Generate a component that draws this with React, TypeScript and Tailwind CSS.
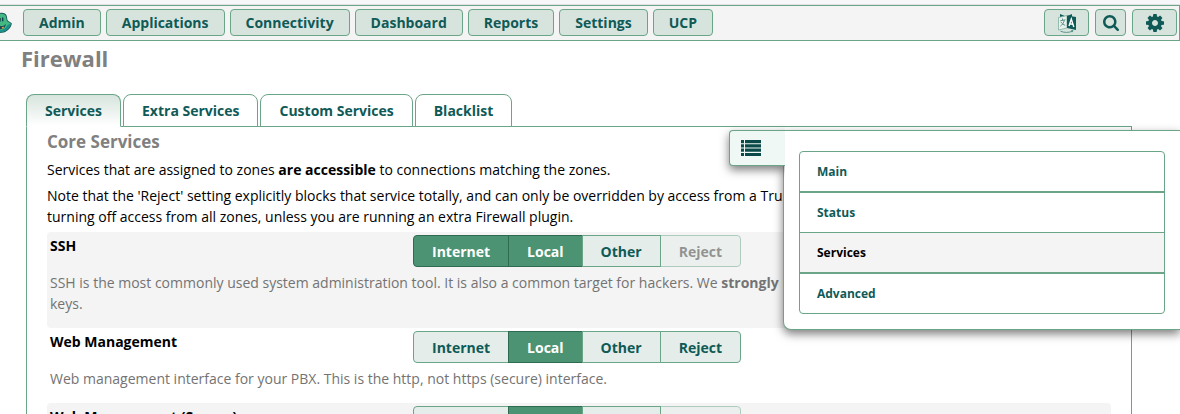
import { useState } from 'react'

const NAV = ['Admin', 'Applications', 'Connectivity', 'Dashboard', 'Reports', 'Settings', 'UCP']
const TABS = ['Services', 'Extra Services', 'Custom Services', 'Blacklist']
const ZONES = ['Internet', 'Local', 'Other', 'Reject']

const MENU = [
  { label: 'Main', border: 'border-b-2' },
  { label: 'Status', border: 'border-b' },
  { label: 'Services', border: 'border-b-2' },
  { label: 'Advanced', border: '' },
]

interface Service {
  id: string
  name: string
  zones: string[]
  lockReject: boolean
  desc: React.ReactNode
}

const SERVICES: Service[] = [
  {
    id: 'ssh',
    name: 'SSH',
    zones: ['Internet', 'Local'],
    lockReject: true,
    desc: (
      <>
        SSH is the most commonly used system administration tool. It is also a common target for hackers. We{' '}
        <b>strongly recommend</b> using a strong password and SSH keys.
      </>
    ),
  },
  {
    id: 'http',
    name: 'Web Management',
    zones: ['Local'],
    lockReject: false,
    desc: 'Web management interface for your PBX. This is the http, not https (secure) interface.',
  },
  {
    id: 'https',
    name: 'Web Management (Secure)',
    zones: ['Local'],
    lockReject: true,
    desc: 'Web management interface for your PBX. This is the https interface.',
  },
]

const IconFrog = () => (
  <svg viewBox="0 0 12 22" className="w-3 h-[22px]">
    <path d="M0 1C3 .3 6 1.500 6.800 4c.5 1.800.2 3.500 1.200 4.800l3.800 2.400c0 3.500-4 8-8 9.300L0 21Z" fill="#1c5a5c" />
    <path d="M0 1.800C2.800 1.200 5.300 2.200 6 4.400c.6 1.900.2 3.600 1.500 5l3.300 2.200c-.3 2.900-3.800 6.900-7.300 8L0 20.200Z" fill="#44b883" />
    <path d="M7.500 13l3.300-1.400c-.3 2.900-3.800 6.900-7.300 8L0 20.200v-1.700c3.500-.5 6.500-2.500 7.500-5.500Z" fill="#15908c" />
    <path d="M2 5.500h1.400v3.800H2zM0 6h.7v3.500H0z" fill="#123f49" />
    <path d="M0 14c3 .6 4.800-.6 5.600-2.200C6 15 3.500 17.500 0 17.200Z" fill="#1c4650" />
    <path d="M1.800 15.200l2.400-.8-.8 2H1.800z" fill="#f5a04c" />
  </svg>
)

const IconLanguage = () => (
  <svg viewBox="0 0 20 20" className="w-5 h-5" fill="none">
    <path d="M3 1l6 2.500L15 1v3H3Z" fill="#0f5a57" />
    <path d="M1.500 4.500L10 2.500V15l-8.500 2Z" fill="#e8f1ed" stroke="#7fae9f" strokeWidth="0.800" />
    <path d="M10 2.500l9 1.500v13l-9-2Z" fill="#0f5a57" />
    <path d="M12 13l2.300-7 2.500 8M12.700 10.800l3.300.6" stroke="#fff" strokeWidth="1.400" />
    <path d="M3.200 7.800l5.200-1M5.500 5.500v1.800M7.300 7.200c-.5 2.500-2 4.800-4 6M4 9c1 1.800 2.500 2.800 4.200 3.300" stroke="#4f8b7f" strokeWidth="0.900" />
    <path d="M3.500 18.200c3.500 1.600 8 1.500 11.500.2M14 17.800l2-.3-.8 1.700" stroke="#4f8b7f" strokeWidth="0.900" />
  </svg>
)

const IconSearch = () => (
  <svg viewBox="0 128 1664 1664" className="w-4 h-4" fill="currentColor">
    <path d="M1152 832q0-185-131.500-316.500t-316.500-131.500-316.500 131.500-131.500 316.500 131.500 316.500 316.500 131.500 316.500-131.500 131.500-316.500zm512 832q0 52-38 90t-90 38q-54 0-90-38l-343-342q-179 124-399 124-143 0-273.500-55.500t-225-150-150-225-55.500-273.500 55.500-273.500 150-225 225-150 273.500-55.500 273.500 55.500 225 150 150 225 55.500 273.500q0 220-124 399l343 343q37 37 37 90z" />
  </svg>
)

const IconCog = () => (
  <svg viewBox="0 128 1536 1536" className="w-[18px] h-[18px]" fill="currentColor">
    <path d="M1024 896q0-106-75-181t-181-75-181 75-75 181 75 181 181 75 181-75 75-181zm512-109v222q0 12-8 23t-20 13l-185 28q-19 54-39 91 35 50 107 138 10 12 10 25t-9 23q-27 37-99 108t-94 71q-12 0-26-9l-138-108q-44 23-91 38-16 136-29 186-7 28-36 28h-222q-14 0-24.500-8.500t-11.500-21.500l-28-184q-49-16-90-37l-141 107q-10 9-25 9-14 0-25-11-126-114-165-168-7-10-7-23 0-12 8-23 15-21 51-66.500t54-70.500q-27-50-41-99l-183-27q-13-2-21-12.500t-8-23.500v-222q0-12 8-23t19-13l186-28q14-46 39-92-40-57-107-138-10-12-10-24 0-10 9-23 26-36 98.500-107.500t94.500-71.500q13 0 26 10l138 107q44-23 91-38 16-136 29-186 7-28 36-28h222q14 0 24.500 8.500t11.500 21.500l28 184q49 16 90 37l142-107q9-9 24-9 13 0 25 10 129 119 165 170 7 8 7 22 0 12-8 23-15 21-51 66.500t-54 70.500q26 50 41 98l183 28q13 2 21 12.500t8 23.500z" />
  </svg>
)

const IconList = () => (
  <svg viewBox="0 0 20 16" className="w-5 h-4" fill="currentColor">
    <path d="M0 0h3v3.200H0zM4 0h16v3.200H4zM0 4.300h3v3.200H0zM4 4.300h16v3.200H4zM0 8.600h3v3.200H0zM4 8.600h16v3.200H4zM0 12.900h3V16H0zM4 12.900h16V16H4z" />
  </svg>
)

function ZonePicker({ service }: { service: Service }) {
  const [on, setOn] = useState(service.zones)
  const toggle = (z: string) => setOn(on.includes(z) ? on.filter((o) => o !== z) : [...on, z])

  return (
    <div className="flex">
      {ZONES.map((z) => (
        <label key={z} className="relative flex -ml-px first:ml-0 group">
          <input
            type="checkbox"
            className="peer sr-only"
            checked={on.includes(z)}
            disabled={z === 'Reject' && service.lockReject}
            onChange={() => toggle(z)}
          />
          <span className="h-8 px-[18px] leading-8 border border-[#6aa588] bg-[#e4edea] font-bold text-[#0f5a57] group-first:rounded-l group-last:rounded-r peer-checked:bg-[#4b9372] peer-checked:border-[#2f6b50] peer-checked:text-white peer-disabled:opacity-50 peer-disabled:text-[#333]">
            {z}
          </span>
        </label>
      ))}
    </div>
  )
}

export default function App() {
  const [tab, setTab] = useState('Services')
  const [page, setPage] = useState('Services')

  return (
    <div className="relative h-screen overflow-hidden bg-white font-['Open_Sans',sans-serif] text-sm leading-[21px] text-black">
      {/* Top bar */}
      <div className="h-[5px] bg-[#f7f7f9] border-b border-[#e1e1e6]" />
      <nav className="flex items-center h-9 pr-0.5 pb-px border border-l-0 border-[#6aa588] bg-[#f4f4f4]">
        <a href="#home" aria-label="Home" className="mr-[11px]">
          <IconFrog />
        </a>
        <div className="flex gap-[5px]">
          {NAV.map((n) => (
            <button key={n} className="h-[27px] px-[15px] leading-[25px] rounded border border-[#6aa588] bg-[#d7e4dd] font-bold text-[#0f5a57]">
              {n}
            </button>
          ))}
        </div>
        <div className="flex gap-1.5 ml-auto text-[#0f5a57]">
          <button aria-label="Language" className="flex items-center justify-center w-[45px] h-[27px] rounded border border-[#6aa588] bg-[#d7e4dd]">
            <IconLanguage />
          </button>
          <button aria-label="Search" className="flex items-center justify-center w-[31px] h-[27px] rounded border border-[#6aa588] bg-[#d7e4dd]">
            <IconSearch />
          </button>
          <button aria-label="Settings menu" className="flex items-center justify-center w-[45px] h-[27px] rounded border border-[#6aa588] bg-[#d7e4dd]">
            <IconCog />
          </button>
        </div>
      </nav>

      <h1 className="mt-0.5 ml-[21px] text-[22px] leading-[30px] font-bold text-[#808080]">Firewall</h1>

      <main className="mt-[21px] ml-[26px] mr-12">
        <div role="tablist" className="flex gap-0.5">
          {TABS.map((t) => (
            <button
              key={t}
              role="tab"
              aria-selected={t === tab}
              onClick={() => setTab(t)}
              className={`h-[33px] px-[18px] rounded-t-lg border border-[#6aa588] font-bold text-[#0f5a57] ${
                t === tab ? 'relative z-10 border-b-white bg-linear-to-b from-[#d7e4dd] to-white' : 'bg-white'
              }`}
            >
              {t}
            </button>
          ))}
        </div>

        <section className="-mt-px px-5 pt-[5px] border border-[#6aa588]">
          <h2 className="text-[17px] leading-5 font-bold text-[#808080]">Core Services</h2>
          <p className="mt-[7px]">
            Services that are assigned to zones <b>are accessible</b> to connections matching the zones.
          </p>
          <p className="mt-[5px] mb-[5px]">
            Note that the 'Reject' setting explicitly blocks that service totally, and can only be overridden by access
            from a Trusted Zone. This is functionally equivalent to turning off access from all zones, unless you are
            running an extra Firewall plugin.
          </p>

          <div>
            {SERVICES.map((s) => (
              <div key={s.id} className="px-[3px] pt-[3px] pb-[14px] rounded odd:bg-[#f4f4f4]">
                <div className="flex mb-[5px]">
                  <h3 className="w-[363px] font-bold">{s.name}</h3>
                  <ZonePicker service={s} />
                </div>
                <p className="text-[#737373]">{s.desc}</p>
              </div>
            ))}
          </div>
        </section>
      </main>

      {/* Slide-out menu */}
      <aside className="absolute top-[130px] right-0 z-20 flex items-start">
        {/* clipped on the right so its shadow stays off the panel */}
        <button
          aria-label="Toggle menu"
          className="relative z-10 flex items-center w-14 h-9 pl-[11px] rounded-l border border-r-0 border-[#6aa588] bg-[#eff8f4] text-[#0b4a48] shadow-[0_4px_10px_rgba(0,0,0,0.5)] [clip-path:inset(-20px_0_-20px_-20px)]"
        >
          <IconList />
        </button>
        <div className="w-[397px] pt-5 pb-[15px] px-[15px] -ml-0.5 rounded-bl-lg border border-r-0 border-[#6aa588] bg-white shadow-[0_4px_10px_rgba(0,0,0,0.5)]">
          <ul className="rounded border border-[#6aa588] text-xs font-bold overflow-hidden">
            {MENU.map((m) => (
              <li key={m.label} className={`border-[#6aa588] ${m.border}`}>
                <a
                  href={`#${m.label.toLowerCase()}`}
                  onClick={() => setPage(m.label)}
                  className={`block px-[17px] leading-[39px] ${m.label === page ? 'bg-[#f4f4f4] text-black' : 'text-[#0f5a57]'}`}
                >
                  {m.label}
                </a>
              </li>
            ))}
          </ul>
        </div>
      </aside>
    </div>
  )
}
